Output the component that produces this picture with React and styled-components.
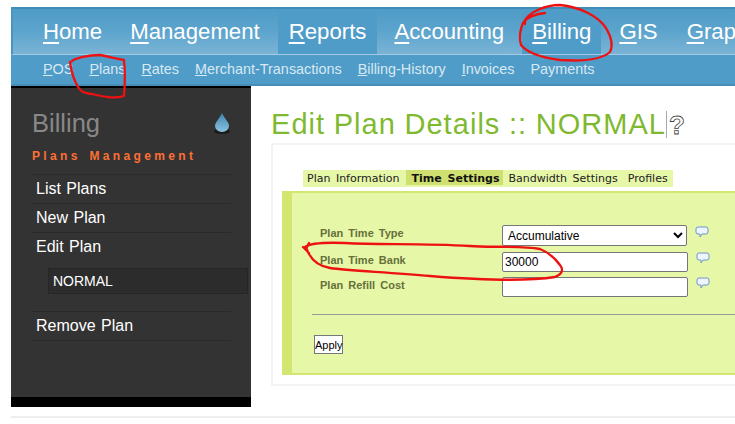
import React from "react";
import styled, { createGlobalStyle } from "styled-components";

const Global = createGlobalStyle`
  html, body { margin: 0; padding: 0; background: #fff; overflow: hidden; width: 735px; height: 424px; }
  * { box-sizing: border-box; }
  body { font-family: "Liberation Sans", Arial, sans-serif; }
`;
const Page = styled.div`position: relative; width: 735px; height: 424px; overflow: hidden; padding: 7px 0 0 11px;`;
const Wrap = styled.div`width: 724px; overflow: hidden;`;
const TopNav = styled.div`
  height: 48px; border-top: 2px solid #3f8db9; border-left: 2px solid #4a94c0; display: flex; padding-left: 18px;
  background: linear-gradient(#4f9cc8 0%, #5aa3cc 45%, #7ab4d6 100%); border-bottom: 1px solid #a5cbe2;
`;
const TopItem = styled.a`
  display: block; height: 45px; padding: 0 ${p => p.$pr}px 0 ${p => p.$pl}px; font-size: 22.2px; line-height: 45px; color: #fff;
  background: ${p => p.$on ? "#4f9cc8" : "transparent"}; white-space: nowrap;
`;
const Key = styled.span`text-decoration: underline; text-decoration-thickness: 2px; text-underline-offset: 3px;`;
const SubNav = styled.div`
  height: 31px; display: flex; background: #4f9cc8; padding-left: 32px; border-bottom: 2px solid #458fba;
`;
const SubItem = styled.a`
  font-size: 14.4px; line-height: 29px; color: #d8e9f3; margin-right: ${p => p.$mr}px; white-space: nowrap;
  & > span { text-decoration: underline; }
`;
const Body = styled.div`display: flex; border-bottom: 2px solid #eeeeee; height: 332px;`;
const Side = styled.aside`
  width: 240px; height: 321px; background: #333; border-top: 2px solid #000; border-bottom: 10px solid #000; padding: 17px 20px 0 21px; flex: none;
`;
const SideHead = styled.div`display: flex; justify-content: space-between; align-items: center; height: 36px;`;
const SideTitle = styled.h2`margin: 0; font-size: 25.5px; font-weight: 400; color: #888; line-height: 36px;`;
const Section = styled.h3`
  margin: 7px 0 0; height: 27px; font-size: 12px; line-height: 16px; font-weight: 700; color: #ff6f33; letter-spacing: 3.35px; white-space: nowrap; border-bottom: 1px solid #2a2a2a; word-spacing: 2px;
`;
const SideItem = styled.div`
  height: 29px; line-height: 28px; font-size: 16px; color: #fff; padding-left: 4px; border-bottom: 1px solid ${p => p.$flat ? "transparent" : "#2a2a2a"}; word-spacing: 1px;
`;
const Picked = styled.div`
  width: 200px; height: 26px; margin: 6px 0 17px 16px; background: #2c2c2c; border: 1px solid #262626; color: #fff; font-size: 14px; line-height: 24px; padding-left: 4px;
`;
const Rule = styled.div`height: 0; border-bottom: 1px solid #2a2a2a;`;
const Main = styled.main`flex: 1; padding: 18px 0 0 20px; min-width: 0;`;
const Title = styled.h1`
  margin: 0; height: 39px; font-size: 29px; line-height: 41px; font-weight: 400; color: #7fb92f; letter-spacing: 1.05px; word-spacing: -.6px; white-space: nowrap; display: flex;
`;
const Help = styled.span`
  padding-left: 2px; border-left: 1px solid #aaa; height: 27px; margin-top: 7px; font-size: 26px; line-height: 29px; color: #fff; -webkit-text-stroke: .8px #444; letter-spacing: 0; font-weight: 700;
`;
const Card = styled.div`
  height: 243px; border: 2px solid #f3f3f3; border-right: none; padding: 25px 0 0 9px;
`;
const Tabs = styled.div`
  display: flex; width: 370px; margin-left: 21px; height: 17px; background: #e6f7a8; font-family: "DejaVu Sans", Verdana, sans-serif; font-size: 11px; line-height: 15px; color: #222; padding-left: 4px; word-spacing: 2px;
`;
const Tab = styled.span`
  margin-right: ${p => p.$mr}px; white-space: nowrap; height: 15px; padding-top: 1px;
  ${p => p.$on && "background:#cfe070;font-weight:700;color:#111;padding:1px 3px 0 6px;"}
`;
const Panel = styled.div`
  margin-top: 4px; height: 184px; background: #e6f7a8; border-left: 10px solid #d2e670; border-top: 2px solid #d2e670; border-bottom: 2px solid #d2e670; padding: 32px 0 0 20px;
`;
const FormRow = styled.div`display: flex; align-items: flex-start; height: ${p => p.$h}px;`;
const Label = styled.label`
  width: 182px; margin-left: 8px; font-size: 11px; font-weight: 700; color: #66703a; letter-spacing: 0; word-spacing: 2px; line-height: 16px; flex: none;
`;
const Select = styled.select`
  width: 185px; height: 21px; font: 12px "Liberation Sans", Arial, sans-serif; background: #fff; border: 1px solid #767676; border-radius: 2px; color: #000; padding-left: 1px;
`;
const Input = styled.input`
  width: 186px; height: 20px; font: 12px "Liberation Sans", Arial, sans-serif; border: 1px solid #767676; border-radius: 2px; padding: 1px 2px; background: #fff; color: #000;
`;
const Bubble = styled.svg`width: 14px; height: 13px; margin: ${p => p.$mt}px 0 0 8px; flex: none;`;
const Hr = styled.div`height: 1px; background: #999; margin-top: 17px;`;
const Apply = styled.button`
  display: block; margin: 20px 0 0 2px; width: 29px; height: 19px; padding: 0; font: 11px "Liberation Sans", Arial, sans-serif; background: #fff; color: #000; border: 1px solid #777;
`;
const Ink = styled.svg`position: absolute; left: 0; top: 0; width: 735px; height: 424px; pointer-events: none;`;

const Tip = ({ mt }) => (
  <Bubble $mt={mt} viewBox="0 0 14 13">
    <path d="M3 1h8a2 2 0 0 1 2 2v3a2 2 0 0 1-2 2H7l-2 3V8H3a2 2 0 0 1-2-2V3a2 2 0 0 1 2-2z" fill="#eef5ff" stroke="#6f96cc" strokeWidth="1" />
  </Bubble>
);
const Drop = () => (
  <svg width="18" height="22" viewBox="0 0 18 22">
    <defs><linearGradient id="d" x1="0" y1="0" x2="0" y2="1"><stop offset="0" stopColor="#3d85b0" /><stop offset="1" stopColor="#8cc2e0" /></linearGradient></defs>
    <ellipse cx="9" cy="19.5" rx="8" ry="2.5" fill="#1a1a1a" />
    <path d="M9 1C7 6 2 10 2 14a7 6 0 0 0 14 0C16 10 11 6 9 1z" fill="url(#d)" />
  </svg>
);
const Top = ({ k, r, ...p }) => <TopItem {...p}><Key>{k}</Key>{r}</TopItem>;
const Sub = ({ k, r, ...p }) => <SubItem {...p}><span>{k}</span>{r}</SubItem>;

export default function App() {
  return (
    <Page>
      <Global />
      <Wrap>
        <TopNav>
          <Top $pl={12} $pr={28} k="H" r="ome" />
          <Top $pl={0} $pr={18} k="M" r="anagement" />
          <Top $on $pl={11} $pr={11} k="R" r="eports" />
          <Top $pl={17} $pr={18} k="A" r="ccounting" />
          <Top $on $pl={10} $pr={10} k="B" r="illing" />
          <Top $pl={18} $pr={29} k="G" r="IS" />
          <Top $pl={0} $pr={0} k="G" r="raphs" />
        </TopNav>
        <SubNav>
          <Sub $mr={16} k="P" r="OS" />
          <Sub $mr={16} k="P" r="lans" />
          <Sub $mr={16} k="R" r="ates" />
          <Sub $mr={16} k="M" r="erchant-Transactions" />
          <Sub $mr={16} k="B" r="illing-History" />
          <Sub $mr={16} k="I" r="nvoices" />
          <Sub $mr={0} k="" r="Payments" />
        </SubNav>
        <Body>
          <Side>
            <SideHead><SideTitle>Billing</SideTitle><Drop /></SideHead>
            <Section>Plans Management</Section>
            <SideItem>List Plans</SideItem>
            <SideItem>New Plan</SideItem>
            <SideItem $flat>Edit Plan</SideItem>
            <Picked>NORMAL</Picked>
            <Rule />
            <SideItem>Remove Plan</SideItem>
          </Side>
          <Main>
            <Title>Edit Plan Details :: NORMAL<Help>?</Help></Title>
            <Card>
              <Tabs>
                <Tab $mr={6}>Plan Information</Tab>
                <Tab $on $mr={6}>Time Settings</Tab>
                <Tab $mr={10}>Bandwidth Settings</Tab>
                <Tab $mr={0}>Profiles</Tab>
              </Tabs>
              <Panel>
                <FormRow $h={27}><Label>Plan Time Type</Label><Select defaultValue="a"><option value="a">Accumulative</option></Select><Tip mt={1} /></FormRow>
                <FormRow $h={25}><Label>Plan Time Bank</Label><Input defaultValue="30000" /><Tip mt={0} /></FormRow>
                <FormRow $h={20}><Label>Plan Refill Cost</Label><Input /><Tip mt={0} /></FormRow>
                <Hr />
                <Apply>Apply</Apply>
              </Panel>
            </Card>
          </Main>
        </Body>
      </Wrap>
      <Ink viewBox="0 0 735 424" fill="none" stroke="#ee1111" strokeWidth="2.3" strokeLinecap="round" strokeLinejoin="round">
        <path d="M72 61C76 58 88 55 100 55C110 57 118 59 124 60C125 70 125 85 124 96C115 99 105 97 92 94C84 93 81 92 78 87C74 80 71 70 70 62" />
        <path d="M545 13C535 14 527 17 523 23C520 30 519 38 521 45C528 54 545 58 560 60C575 61 600 61 610 52C613 46 612 38 606 28C598 16 580 7 560 5C545 5 530 12 525 20L525 24" />
        <path d="M305 247C309 244 320 242 345 243C380 245 420 243 470 246C490 248 520 245 540 249C550 253 555 258 560 265C564 270 562 274 555 277C530 281 480 280 430 276C390 272 350 271 330 268C318 266 310 260 306 247M303 247L309 253M309 243L306 249" />
      </Ink>
    </Page>
  );
}
